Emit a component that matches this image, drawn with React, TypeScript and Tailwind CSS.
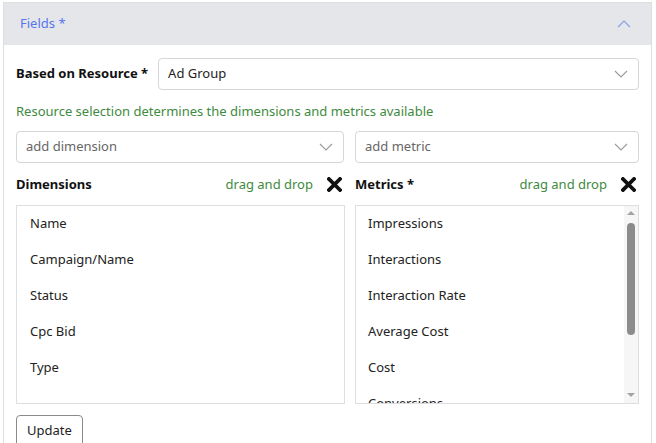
import React from "react";

const Chevron = ({ up = false, className = "" }: { up?: boolean; className?: string }) => (
  <svg width="14" height="8" viewBox="0 0 14 8" className={className} fill="none">
    <path d={up ? "M1 7L7 1L13 7" : "M1 1L7 7L13 1"} stroke="currentColor" strokeWidth="1.1" />
  </svg>
);

const XIcon = () => (
  <svg width="15" height="15" viewBox="0 0 15 15">
    <path d="M2 2L13 13M13 2L2 13" stroke="#111" strokeWidth="3.8" strokeLinecap="square" />
  </svg>
);

const Select = ({ label, placeholder = false, className = "" }: { label: string; placeholder?: boolean; className?: string }) => (
  <div className={`flex h-[32px] items-center justify-between rounded-[4px] border border-[#d4d6da] bg-white pl-[9px] pr-[10px] ${className}`}>
    <span className={placeholder ? "text-[#666]" : "text-[#222]"}>{label}</span>
    <Chevron className="text-[#9a9a9a]" />
  </div>
);

export default function App() {
  const dims = ["Name", "Campaign/Name", "Status", "Cpc Bid", "Type"];
  const metrics = ["Impressions", "Interactions", "Interaction Rate", "Average Cost", "Cost", "Conversions"];
  return (
    <div
      className="h-[443px] w-[656px] overflow-hidden bg-white pl-[3px] pr-[4px] pt-[2px] text-[13px] text-[#222]"
      style={{ fontFamily: '"Noto Sans", "Open Sans", sans-serif' }}
    >
      <div className="h-[460px] border border-[#dcdee2]">
        <div className="flex h-[42px] items-center justify-between bg-[#e4e6ea] pl-[16px] pr-[20px]">
          <span className="text-[#5676ef]">Fields *</span>
          <Chevron up className="text-[#8d9de6]" />
        </div>
        <div className="px-[12px] pt-[13px]">
          <div className="flex items-center gap-[10px]">
            <span className="font-bold text-[#111]">Based on Resource *</span>
            <Select label="Ad Group" className="flex-1" />
          </div>
          <div className="mt-[12px] text-[#3e8a3e]">Resource selection determines the dimensions and metrics available</div>
          <div className="mt-[9px] flex gap-[11px]">
            <Select label="add dimension" placeholder className="w-[328px]" />
            <Select label="add metric" placeholder className="flex-1" />
          </div>
          <div className="mt-[12px] flex gap-[10px]">
            <div className="w-[329px]">
              <div className="flex h-[20px] items-center justify-between pr-[3px]">
                <span className="font-bold text-[#111]">Dimensions</span>
                <div className="flex items-center gap-[14px]">
                  <span className="text-[#3e8a3e]">drag and drop</span>
                  <XIcon />
                </div>
              </div>
              <div className="mt-[10px] h-[199px] border border-[#dcdee2] px-[13px]">
                {dims.map((d) => (
                  <div key={d} className="flex h-[36px] items-center">{d}</div>
                ))}
              </div>
            </div>
            <div className="flex-1">
              <div className="flex h-[20px] items-center justify-between pr-[3px]">
                <span className="font-bold text-[#111]">Metrics *</span>
                <div className="flex items-center gap-[14px]">
                  <span className="text-[#3e8a3e]">drag and drop</span>
                  <XIcon />
                </div>
              </div>
              <div className="relative mt-[10px] h-[199px] overflow-hidden border border-[#dcdee2] px-[12px]">
                {metrics.map((d) => (
                  <div key={d} className="flex h-[36px] shrink-0 items-center">{d}</div>
                ))}
                <div className="absolute bottom-0 right-0 top-0 flex w-[14px] flex-col items-center bg-[#f6f6f6]">
                  <div className="mt-[5px] h-0 w-0 border-x-[4px] border-b-[4px] border-x-transparent border-b-[#a3a3a3]" />
                  <div className="mt-[8px] h-[112px] w-[8px] rounded-full bg-[#8c8c8c]" />
                  <div className="mt-auto mb-[6px] h-0 w-0 border-x-[4px] border-t-[4px] border-x-transparent border-t-[#a3a3a3]" />
                </div>
              </div>
            </div>
          </div>
          <button className="mt-[11px] h-[32px] rounded-[4px] border border-[#8a8a8a] bg-white px-[10px] text-[#222]">Update</button>
        </div>
      </div>
    </div>
  );
}
